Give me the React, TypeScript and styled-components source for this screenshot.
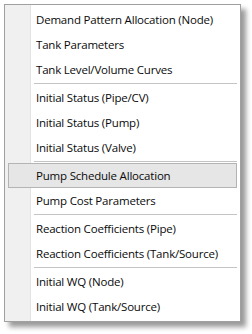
import React from 'react';
import styled, { createGlobalStyle } from 'styled-components';

type Entry = { label: string; active?: boolean } | 'sep';

const ENTRIES: Entry[] = [
  { label: 'Demand Pattern Allocation (Node)' },
  { label: 'Tank Parameters' },
  { label: 'Tank Level/Volume Curves' },
  'sep',
  { label: 'Initial Status (Pipe/CV)' },
  { label: 'Initial Status (Pump)' },
  { label: 'Initial Status (Valve)' },
  'sep',
  { label: 'Pump Schedule Allocation', active: true },
  { label: 'Pump Cost Parameters' },
  'sep',
  { label: 'Reaction Coefficients (Pipe)' },
  { label: 'Reaction Coefficients (Tank/Source)' },
  'sep',
  { label: 'Initial WQ (Node)' },
  { label: 'Initial WQ (Tank/Source)' },
];

export default function App() {
  return (
    <>
      <GlobalStyle />
      <Page>
        <Menu>
          {ENTRIES.map((entry, i) =>
            entry === 'sep' ? (
              <Separator key={i} />
            ) : (
              <Item key={i} $active={!!entry.active}>
                <Label>{entry.label}</Label>
              </Item>
            )
          )}
        </Menu>
      </Page>
    </>
  );
}

const GlobalStyle = createGlobalStyle`
  html, body {
    margin: 0;
    padding: 0;
    background: #ffffff;
  }
  body {
    font-family: "Open Sans", "Noto Sans", sans-serif;
  }
`;

const Page = styled.div`
  padding: 4px 0 0 4px;
  width: 252px;
  height: 334px;
  box-sizing: border-box;
`;

const Menu = styled.div`
  position: relative;
  width: 237px;
  box-sizing: border-box;
  border: 1px solid #a0a0a0;
  padding: 2px 0;
  background: linear-gradient(
    to right,
    #f0f0f0 0,
    #f0f0f0 25px,
    #e2e3e3 25px,
    #e2e3e3 26px,
    #ffffff 26px
  );
  box-shadow: 5px 5px 5px rgba(0, 0, 0, 0.4);
`;

const Item = styled.div<{ $active: boolean }>`
  height: 25px;
  margin: 0 3px;
  box-sizing: border-box;
  display: flex;
  align-items: center;
  padding-left: 27px;
  border: 1px solid ${({ $active }) => ($active ? '#b4b4b4' : 'transparent')};
  background: ${({ $active }) => ($active ? '#e6e6e6' : 'transparent')};
`;

const Label = styled.span`
  font-size: 11.5px;
  color: #0a0a0a;
  white-space: nowrap;
  letter-spacing: -0.2px;
`;

const Separator = styled.div`
  height: 3px;
  margin-left: 29px;
  margin-right: 3px;
  display: flex;
  align-items: center;
  &::after {
    content: '';
    flex: 1;
    height: 1px;
    background: #c4c4c4;
  }
`;
